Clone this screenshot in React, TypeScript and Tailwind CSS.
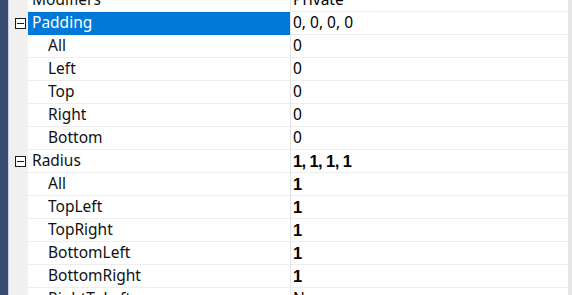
const GRID = '#eeeeee'

type Row = { name: string; value: string; group?: boolean; bold?: boolean; selected?: boolean }

const rows: Row[] = [
  { name: 'Modifiers', value: 'Private' },
  { name: 'Padding', value: '0, 0, 0, 0', group: true, selected: true },
  { name: 'All', value: '0' },
  { name: 'Left', value: '0' },
  { name: 'Top', value: '0' },
  { name: 'Right', value: '0' },
  { name: 'Bottom', value: '0' },
  { name: 'Radius', value: '1, 1, 1, 1', group: true, bold: true },
  { name: 'All', value: '1', bold: true },
  { name: 'TopLeft', value: '1', bold: true },
  { name: 'TopRight', value: '1', bold: true },
  { name: 'BottomLeft', value: '1', bold: true },
  { name: 'BottomRight', value: '1', bold: true },
  { name: 'RightToLeft', value: 'No' },
]

function Minus() {
  return (
    <div className="w-[11px] h-[11px] border border-[#1a1a1a] bg-white flex items-center justify-center">
      <div className="w-[7px] h-px bg-[#1a1a1a]" />
    </div>
  )
}

function PropRow({ row, first }: { row: Row; first?: boolean }) {
  const indent = row.group || first ? 'pl-[4px]' : 'pl-[20px]'
  return (
    <div className="flex h-[23px] shrink-0">
      <div className="w-[19px] shrink-0 bg-[#f0f0f0] flex items-center justify-center pl-[3px]">
        {row.group && <Minus />}
      </div>
      <div
        className={`w-[262px] shrink-0 flex items-center border-b ${indent} ${
          row.selected ? 'bg-[#0078d7] text-white' : 'text-[#111]'
        }`}
        style={{ borderColor: row.selected ? '#0078d7' : GRID }}
      >
        <span className="leading-none">{row.name}</span>
      </div>
      <div className="w-px shrink-0 bg-[#e4e4e4]" />
      <div className="flex-1 flex items-center pl-[2px] border-b" style={{ borderColor: GRID }}>
        <span
          className={`leading-none ${
            row.bold
              ? "font-bold font-['Liberation_Sans',Arial,sans-serif] text-[16.5px] tracking-[-0.6px]"
              : ''
          }`}
        >
          {row.value}
        </span>
      </div>
    </div>
  )
}

export default function App() {
  return (
    <div className="w-[572px] h-[295px] overflow-hidden bg-white flex font-['Noto_Sans','Open_Sans',sans-serif] text-[15.5px]">
      <div className="w-[8px] shrink-0 bg-[#3b4c6e]" />
      <div className="w-px shrink-0 bg-[#c9d3e6]" />
      <div className="flex-1 flex flex-col -mt-[11px]">
        {rows.map((r, i) => (
          <PropRow key={i} row={r} first={i === 0} />
        ))}
      </div>
      <div className="w-[4px] shrink-0 bg-[#e6e6e6]" />
    </div>
  )
}
